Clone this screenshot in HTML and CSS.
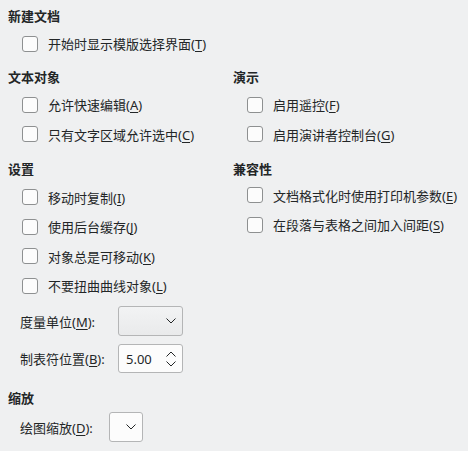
FILE: index.html
```html
<!DOCTYPE html>
<html lang="zh-CN">
<head>
<meta charset="utf-8">
<title>选项</title>
<link rel="stylesheet" href="styles.css">
</head>
<body>
<div class="page">
  <div class="section first">
    <div class="title">新建文档</div>
    <div class="rows">
      <label class="check"><span class="box"></span><span>开始时显示模版选择界面(<u>T</u>)</span></label>
    </div>
  </div>
  <div class="cols">
    <div class="col left">
      <div class="section">
        <div class="title">文本对象</div>
        <div class="rows">
          <label class="check"><span class="box"></span><span>允许快速编辑(<u>A</u>)</span></label>
          <label class="check"><span class="box"></span><span>只有文字区域允许选中(<u>C</u>)</span></label>
        </div>
      </div>
      <div class="section">
        <div class="title">设置</div>
        <div class="rows settings">
          <label class="check"><span class="box"></span><span>移动时复制(<u>I</u>)</span></label>
          <label class="check"><span class="box"></span><span>使用后台缓存(<u>J</u>)</span></label>
          <label class="check"><span class="box"></span><span>对象总是可移动(<u>K</u>)</span></label>
          <label class="check"><span class="box"></span><span>不要扭曲曲线对象(<u>L</u>)</span></label>
        </div>
        <div class="field unit">
          <span class="flabel">度量单位(<u>M</u>):</span>
          <div class="combo button wide">
            <svg class="chev" width="10" height="6" viewBox="0 0 10 6"><polyline points="0.5,0.5 5,5 9.5,0.5" fill="none" stroke="#232627" stroke-width="1"/></svg>
          </div>
        </div>
        <div class="field tab">
          <span class="flabel">制表符位置(<u>B</u>):</span>
          <div class="spin wide">
            <span class="value">5.00</span>
            <span class="arrows">
              <svg width="10" height="6" viewBox="0 0 10 6"><polyline points="0.5,5.5 5,1 9.5,5.5" fill="none" stroke="#232627" stroke-width="1"/></svg>
              <svg width="10" height="6" viewBox="0 0 10 6"><polyline points="0.5,0.5 5,5 9.5,0.5" fill="none" stroke="#232627" stroke-width="1"/></svg>
            </span>
          </div>
        </div>
      </div>
      <div class="section zoom">
        <div class="title">缩放</div>
        <div class="field draw">
          <span class="flabel">绘图缩放(<u>D</u>):</span>
          <div class="combo plain narrow">
            <svg class="chev" width="10" height="6" viewBox="0 0 10 6"><polyline points="0.5,0.5 5,5 9.5,0.5" fill="none" stroke="#232627" stroke-width="1"/></svg>
          </div>
        </div>
      </div>
    </div>
    <div class="col right">
      <div class="section">
        <div class="title">演示</div>
        <div class="rows">
          <label class="check"><span class="box"></span><span>启用遥控(<u>F</u>)</span></label>
          <label class="check"><span class="box"></span><span>启用演讲者控制台(<u>G</u>)</span></label>
        </div>
      </div>
      <div class="section">
        <div class="title">兼容性</div>
        <div class="rows compat">
          <label class="check"><span class="box"></span><span>文档格式化时使用打印机参数(<u>E</u>)</span></label>
          <label class="check"><span class="box"></span><span>在段落与表格之间加入间距(<u>S</u>)</span></label>
        </div>
      </div>
    </div>
  </div>
</div>
</body>
</html>
```

FILE: styles.css
```css
html, body {
  margin: 0;
  padding: 0;
  background: #eff0f1;
}
body {
  font-family: "Noto Sans", "Noto Sans CJK SC", sans-serif;
  font-size: 13px;
  color: #232627;
  width: 468px;
  height: 451px;
  overflow: hidden;
}
.page {
  padding: 7px 0 0 8px;
}
.title {
  font-weight: bold;
  height: 18px;
  line-height: 18px;
}
.rows {
  margin-top: 4px;
  display: flex;
  flex-direction: column;
}
.rows.settings {
  margin-top: 5px;
}
.rows.compat {
  margin-top: 3px;
}
.cols {
  display: flex;
}
.col.left {
  width: 225px;
}
.section {
  margin-top: 10.5px;
}
.section.first {
  margin-top: 0;
}
.cols .section:first-child {
  margin-top: 9.5px;
}
.section.zoom {
  margin-top: 15.5px;
}
.check {
  display: flex;
  align-items: center;
  height: 29.5px;
  padding-left: 14px;
  gap: 10px;
  white-space: nowrap;
}
.box {
  box-sizing: border-box;
  width: 16px;
  height: 16px;
  border: 1px solid #8e9091;
  border-radius: 3px;
  background: #fcfcfc;
  flex: none;
}
u {
  text-decoration-thickness: 1px;
  text-underline-offset: 2px;
}
.field {
  display: flex;
  align-items: center;
  padding-left: 12px;
  white-space: nowrap;
}
.field.unit {
  margin-top: 5.5px;
}
.field.tab {
  margin-top: 8px;
}
.field.draw {
  margin-top: 5.5px;
}
.flabel {
  width: 98px;
  flex: none;
}
.field.draw .flabel {
  width: 89px;
}
.combo, .spin {
  box-sizing: border-box;
  height: 30px;
  border: 1px solid #b4b5b6;
  border-radius: 3px;
  display: flex;
  align-items: center;
  position: relative;
}
.wide {
  width: 65px;
}
.narrow {
  width: 34px;
}
.combo.button {
  background: linear-gradient(#f2f3f4, #e9eaeb);
  justify-content: flex-end;
  padding-right: 6px;
}
.combo.plain {
  background: #fcfcfc;
  justify-content: flex-end;
  padding-right: 6px;
}
.spin {
  height: 29px;
  background: #fcfcfc;
  justify-content: space-between;
  padding: 0 6px 0 7px;
}
.chev {
  display: block;
}
.arrows {
  display: flex;
  flex-direction: column;
  gap: 4px;
}
.arrows svg {
  display: block;
}
```
